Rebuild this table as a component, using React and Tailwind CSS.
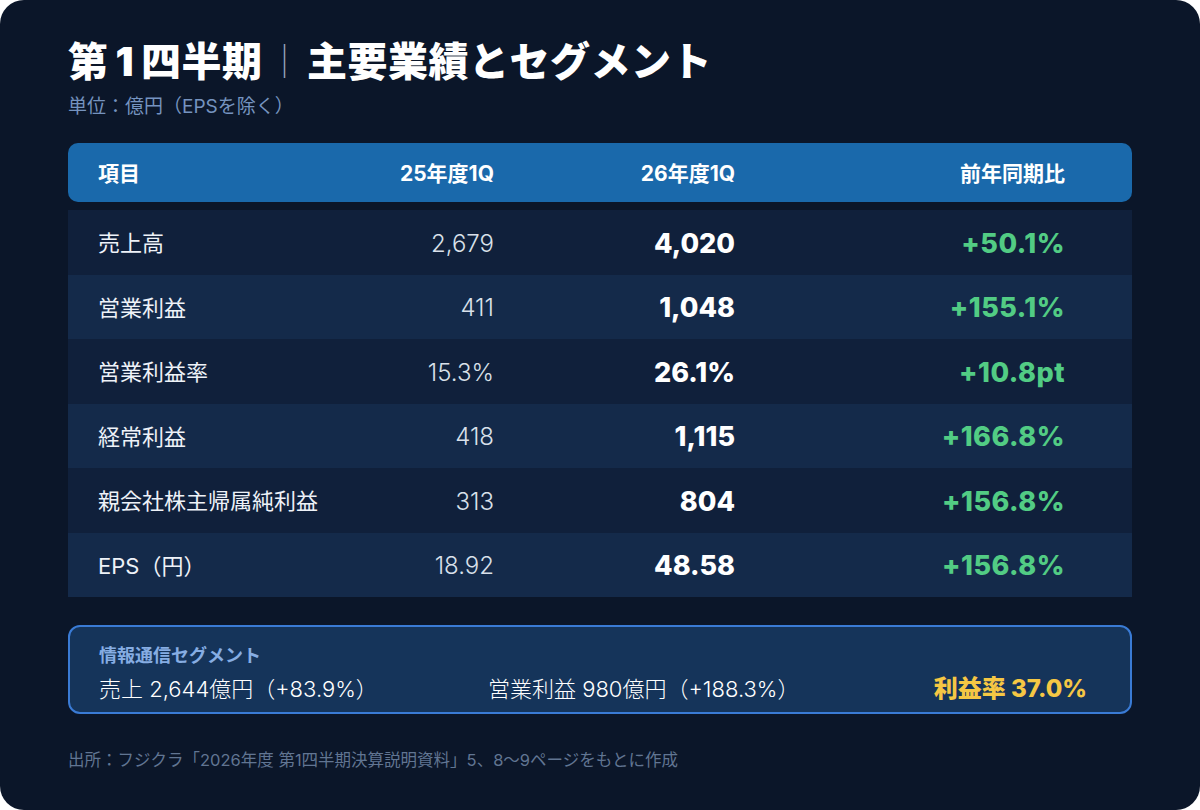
const rows = [
  { label: "売上高", prev: "2,679", cur: "4,020", diff: "+50.1%" },
  { label: "営業利益", prev: "411", cur: "1,048", diff: "+155.1%" },
  { label: "営業利益率", prev: "15.3%", cur: "26.1%", diff: "+10.8pt" },
  { label: "経常利益", prev: "418", cur: "1,115", diff: "+166.8%" },
  { label: "親会社株主帰属純利益", prev: "313", cur: "804", diff: "+156.8%" },
  { label: "EPS（円）", prev: "18.92", cur: "48.58", diff: "+156.8%" },
];

const grid = "grid grid-cols-[216px_180px_241px_1fr] items-center pl-[30px] pr-[67px]";

export default function App() {
  return (
    <div
      className="w-[1200px] h-[810px] rounded-[24px] bg-[#0b1629] px-[68px] pt-[38px] text-white"
      style={{ fontFamily: 'Inter, "Noto Sans CJK JP", sans-serif' }}
    >
      <h1 className="flex items-center text-[40px] leading-[48px] font-black tracking-[0.5px]">
        <span>
          第<span className="mx-[7px]">1</span>四半期
        </span>
        <span className="mx-[5px] text-[34px] font-light text-[#9aa8bd]">｜</span>
        <span>主要業績とセグメント</span>
      </h1>
      <p className="mt-[9px] text-[19px] leading-[24px] text-[#7593bf]">単位：億円（EPSを除く）</p>

      <div className="mt-[24px]">
        <div className={`${grid} h-[59px] rounded-[10px] bg-[#1a69ab] pt-[2px] text-[21px] font-bold`}>
          <div>項目</div>
          <div className="text-right">25年度1Q</div>
          <div className="text-right">26年度1Q</div>
          <div className="text-right">前年同期比</div>
        </div>
        <div className="mt-[8px]">
          {rows.map((r, i) => (
            <div
              key={r.label}
              className={`${grid} h-[64.5px] pt-[3px] ${i % 2 === 0 ? "bg-[#10203b]" : "bg-[#142a4a]"}`}
            >
              <div className="whitespace-nowrap text-[22px] text-[#eef2f8]">{r.label}</div>
              <div className="text-right text-[24px] font-light text-[#d9e0ea]">{r.prev}</div>
              <div className="text-right text-[27px] font-extrabold">{r.cur}</div>
              <div className="text-right text-[27px] font-extrabold tracking-[0.5px] text-[#52cc84]">{r.diff}</div>
            </div>
          ))}
        </div>
      </div>

      <div className="mt-[28px] rounded-[12px] border-2 border-[#3a7bd5] bg-[#15345a] pl-[29px] pr-[43px] pt-[17px] pb-[8px]">
        <div className="text-[18px] leading-[24px] font-bold text-[#86ade3]">情報通信セグメント</div>
        <div className="mt-[6px] grid grid-cols-[389px_1fr_auto] items-center text-[22px] leading-[30px]">
          <div className="font-light">売上 2,644億円（+83.9%）</div>
          <div className="font-light">営業利益 980億円（+188.3%）</div>
          <div className="text-[24px] font-extrabold text-[#f5c744]">利益率 37.0%</div>
        </div>
      </div>

      <p className="mt-[34px] text-[16.5px] leading-[24px] text-[#617592]">
        出所：フジクラ「2026年度 第1四半期決算説明資料」5、8〜9ページをもとに作成
      </p>
    </div>
  );
}
